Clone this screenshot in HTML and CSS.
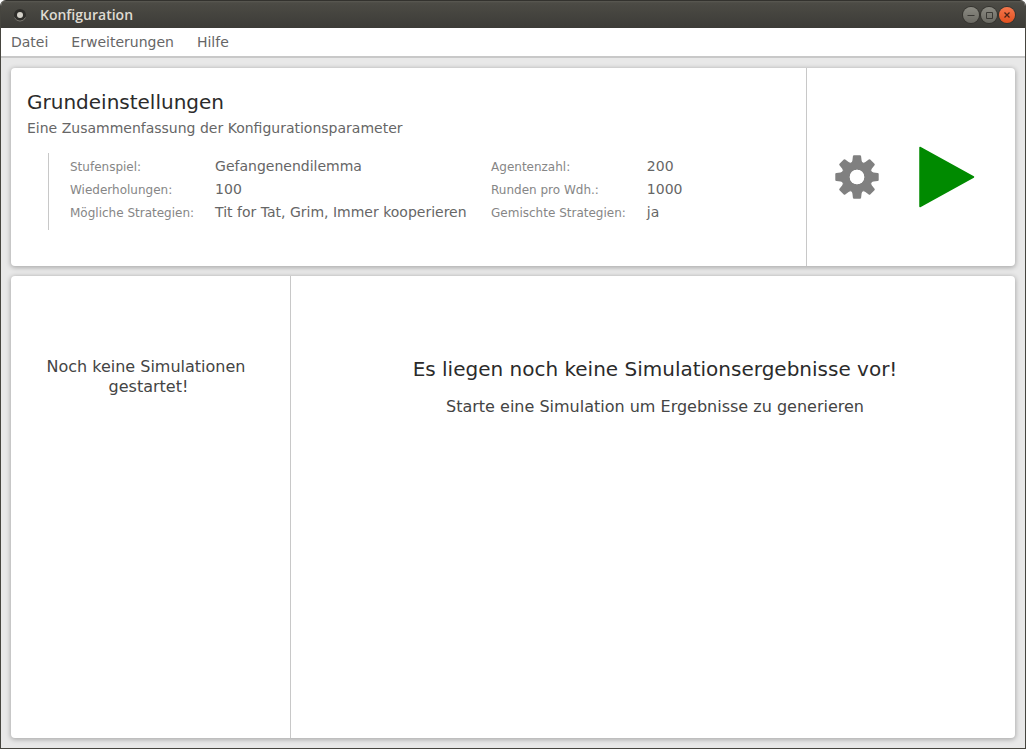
FILE: index.html
```
<!DOCTYPE html>
<html lang="de">
<head>
<meta charset="utf-8">
<title>Konfiguration</title>
<link rel="stylesheet" href="styles.css">
</head>
<body>
<div class="window">
  <header class="titlebar">
    <svg class="app-icon" width="14" height="14" viewBox="0 0 14 14" aria-hidden="true">
      <circle cx="7" cy="7" r="6" fill="#2e2d2a"/>
      <path d="M1.5 9.5A6 6 0 0 0 12.500 9.500" fill="none" stroke="#77756e"/>
      <circle cx="7" cy="7" r="3" fill="#d4d1c9"/>
    </svg>
    <h1 class="title">Konfiguration</h1>
    <div class="controls">
      <button class="control" type="button" aria-label="Minimieren">
        <svg width="16" height="16" viewBox="0 0 16 16"><path d="M4.500 8.500h7" stroke="#3a3935" fill="none"/></svg>
      </button>
      <button class="control" type="button" aria-label="Maximieren">
        <svg width="16" height="16" viewBox="0 0 16 16"><path d="M5.500 5.500h6v6h-6z" stroke="#3a3935" fill="none"/></svg>
      </button>
      <button class="control control-close" type="button" aria-label="Schließen">
        <svg width="16" height="16" viewBox="0 0 16 16"><path d="M5.500 5.500l5 5M10.500 5.500l-5 5" stroke="#4a2417" stroke-width="1.300" fill="none"/></svg>
      </button>
    </div>
  </header>
  <nav class="menubar">
    <button class="menu" type="button">Datei</button>
    <button class="menu" type="button">Erweiterungen</button>
    <button class="menu" type="button">Hilfe</button>
  </nav>
  <main class="content">
    <section class="card">
      <div class="summary">
        <h2 class="heading">Grundeinstellungen</h2>
        <p class="subtitle">Eine Zusammenfassung der Konfigurationsparameter</p>
        <dl class="params">
          <dt>Stufenspiel:</dt><dd>Gefangenendilemma</dd>
          <dt>Agentenzahl:</dt><dd>200</dd>
          <dt>Wiederholungen:</dt><dd>100</dd>
          <dt>Runden pro Wdh.:</dt><dd>1000</dd>
          <dt>Mögliche Strategien:</dt><dd>Tit for Tat, Grim, Immer kooperieren</dd>
          <dt>Gemischte Strategien:</dt><dd>ja</dd>
        </dl>
      </div>
      <div class="actions">
        <button class="action" type="button" aria-label="Einstellungen">
          <svg width="44" height="44" viewBox="-22 -22 44 44" fill="#808080">
            <defs><path id="tooth" d="M-6.200-14Q-4.800-14.800-4.600-16.500L-4.100-20.700Q-4-21.700-3-21.700H3Q4-21.700 4.100-20.700L4.600-16.500Q4.800-14.800 6.200-14z"/></defs>
            <use href="#tooth"/>
            <use href="#tooth" transform="rotate(45)"/>
            <use href="#tooth" transform="rotate(90)"/>
            <use href="#tooth" transform="rotate(135)"/>
            <use href="#tooth" transform="rotate(180)"/>
            <use href="#tooth" transform="rotate(225)"/>
            <use href="#tooth" transform="rotate(270)"/>
            <use href="#tooth" transform="rotate(315)"/>
            <circle r="11.200" fill="none" stroke="#808080" stroke-width="8"/>
            <circle r="7.300" fill="#fff"/>
          </svg>
        </button>
        <button class="action" type="button" aria-label="Simulation starten">
          <svg width="56" height="62" viewBox="0 0 56 62"><path d="M1 1.500L54.500 31 1 60.500z" fill="#008a00" stroke="#008a00" stroke-width="1.500" stroke-linejoin="round"/></svg>
        </button>
      </div>
    </section>
    <section class="card card-results">
      <aside class="simulations">
        <p class="message">Noch keine Simulationen&nbsp;<br>gestartet!</p>
      </aside>
      <div class="results">
        <h2 class="heading">Es liegen noch keine Simulationsergebnisse vor!</h2>
        <p class="message">Starte eine Simulation um Ergebnisse zu generieren</p>
      </div>
    </section>
  </main>
</div>
</body>
</html>
```
FILE: styles.css
```
* {
  box-sizing: border-box;
}

body {
  margin: 0;
  background: #fff;
  font-family: "DejaVu Sans", sans-serif;
  font-size: 14px;
  color: #666;
}

h1, h2, p, dl, dd {
  margin: 0;
  font-weight: normal;
}

button {
  padding: 0;
  border: 0;
  background: none;
  font: inherit;
  color: inherit;
}

svg {
  display: block;
}

.window {
  display: flex;
  flex-direction: column;
  min-height: 100vh;
  border: 1px solid #46453f;
  border-top: 0;
  border-radius: 6px 6px 0 0;
  background: #e8e8e8;
  overflow: hidden;
}

.titlebar {
  display: flex;
  align-items: center;
  height: 28px;
  padding: 0 10px 0 12px;
  border-top: 1px solid #33322e;
  background: linear-gradient(#5b5a53, #4c4b45 2px, #3c3b37);
}

.title {
  flex: 1;
  margin-left: 13px;
  font: 600 14px/20px "Open Sans", "Noto Sans", sans-serif;
  color: #dfdbd2;
}

.controls {
  display: flex;
  gap: 2px;
}

.control {
  width: 16px;
  height: 16px;
  border-radius: 50%;
  background: linear-gradient(#8b8a82, #6a6962);
  box-shadow: 0 0 0 1px #35342f;
}

.control-close {
  background: linear-gradient(#f4774d, #e2501f);
}

.menubar {
  display: flex;
  gap: 23px;
  height: 30px;
  padding: 0 10px;
  border-bottom: 2px solid #c8c8c8;
  background: #fff;
}

.content {
  flex: 1;
  display: flex;
  flex-direction: column;
  gap: 10px;
  padding: 10px;
}

.card {
  display: flex;
  border-radius: 4px;
  background: #fff;
  box-shadow: 0 1px 4px 1px #b0b0b0;
}

.card-results {
  flex: 1;
}

.summary {
  flex: 1;
  padding: 22px 16px 36px;
}

.heading {
  font-size: 20px;
  line-height: 24px;
  color: #2b2b2b;
}

.subtitle {
  margin-top: 4px;
  line-height: 20px;
}

.params {
  display: grid;
  grid-template-columns: max-content minmax(255px, max-content) max-content max-content;
  grid-auto-rows: 23px;
  column-gap: 21px;
  align-items: baseline;
  margin: 15px 0 0 21px;
  padding: 2px 0 6px 21px;
  border-left: 1px solid #c8c8c8;
  line-height: 23px;
}

.params dt {
  font-size: 12px;
  color: #868686;
}

.actions {
  display: flex;
  align-items: center;
  justify-content: center;
  gap: 40px;
  padding: 20px 40px 0 28px;
  border-left: 1px solid #c8c8c8;
}

.simulations,
.results {
  padding: 81px 16px 16px;
  text-align: center;
}

.simulations {
  flex: 0 0 280px;
  padding-left: 12px;
  border-right: 1px solid #c8c8c8;
}

.results {
  flex: 1;
  padding-left: 20px;
}

.message {
  font-size: 16px;
  line-height: 20px;
  color: #444;
}

.results .message {
  margin-top: 16px;
}
```
